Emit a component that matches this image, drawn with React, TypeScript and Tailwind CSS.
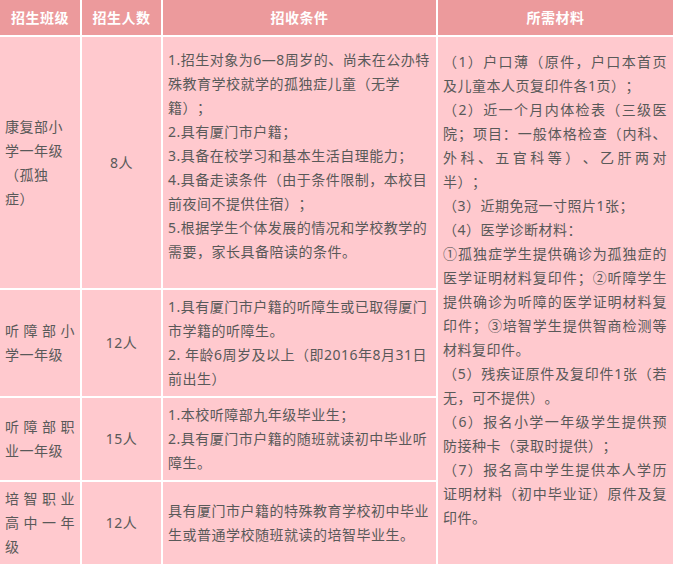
import React from "react";

const cell = "bg-[#ffc9ce] flex items-center";

export default function App() {
  return (
    <div className="w-[673px] h-[564px] overflow-hidden bg-white font-['Noto_Sans','Noto_Sans_CJK_SC',sans-serif] text-[14px] leading-[24px] tracking-[0.5px] text-[#595959] [text-spacing-trim:space-all]">
      <div className="grid grid-cols-[80px_79px_273px_235px] grid-rows-[35px_251px_106px_82px_82px] gap-[2px] bg-white">
        {/* header */}
        <div className="bg-[#ec9a9c] flex items-center justify-center text-white font-bold">招生班级</div>
        <div className="bg-[#ec9a9c] flex items-center justify-center text-white font-bold">招生人数</div>
        <div className="bg-[#ec9a9c] flex items-center justify-center text-white font-bold">招收条件</div>
        <div className="bg-[#ec9a9c] flex items-center justify-center text-white font-bold">所需材料</div>

        {/* row 1 */}
        <div className={`${cell} pl-[5px] pr-[5px]`}>
          <p className="w-full text-left">康复部小学一年级（孤独症）</p>
        </div>
        <div className={`${cell} justify-center`}>8人</div>
        <div className="bg-[#ffc9ce] pl-[5px] pr-[1px] pt-[11px]">
          <p>1.招生对象为6—8周岁的、尚未在公办特殊教育学校就学的孤独症儿童（无学籍）；</p>
          <p>2.具有厦门市户籍；</p>
          <p>3.具备在校学习和基本生活自理能力；</p>
          <p>4.具备走读条件（由于条件限制，本校目前夜间不提供住宿）；</p>
          <p>5.根据学生个体发展的情况和学校教学的需要，家长具备陪读的条件。</p>
        </div>
        <div className="row-span-4 bg-[#ffc9ce] pl-[5px] pr-[6px] pt-[13px] text-justify">
          <p>（1）户口薄（原件，户口本首页及儿童本人页复印件各1页）；</p>
          <p>（2）近一个月内体检表（三级医院；项目：一般体格检查（内科、外科、五官科等）、乙肝两对半）；</p>
          <p>（3）近期免冠一寸照片1张；</p>
          <p>（4）医学诊断材料：</p>
          <p>①孤独症学生提供确诊为孤独症的医学证明材料复印件；②听障学生提供确诊为听障的医学证明材料复印件；③培智学生提供智商检测等材料复印件。</p>
          <p>（5）残疾证原件及复印件1张（若无，可不提供）。</p>
          <p>（6）报名小学一年级学生提供预防接种卡（录取时提供）；</p>
          <p>（7）报名高中学生提供本人学历证明材料（初中毕业证）原件及复印件。</p>
        </div>

        {/* row 2 */}
        <div className={`${cell} pl-[5px] pr-[5px]`}>
          <p className="w-full text-justify">听障部小学一年级</p>
        </div>
        <div className={`${cell} justify-center`}>12人</div>
        <div className={`${cell} pl-[5px] pr-[1px]`}>
          <div>
            <p>1.具有厦门市户籍的听障生或已取得厦门市学籍的听障生。</p>
            <p>2. 年龄6周岁及以上（即2016年8月31日前出生）</p>
          </div>
        </div>

        {/* row 3 */}
        <div className={`${cell} pl-[5px] pr-[5px]`}>
          <p className="w-full text-justify">听障部职业一年级</p>
        </div>
        <div className={`${cell} justify-center`}>15人</div>
        <div className={`${cell} pl-[5px] pr-[1px]`}>
          <div>
            <p>1.本校听障部九年级毕业生；</p>
            <p>2.具有厦门市户籍的随班就读初中毕业听障生。</p>
          </div>
        </div>

        {/* row 4 */}
        <div className={`${cell} pl-[5px] pr-[5px]`}>
          <p className="w-full text-justify">培智职业高中一年级</p>
        </div>
        <div className={`${cell} justify-center`}>12人</div>
        <div className={`${cell} pl-[5px] pr-[1px]`}>
          <p>具有厦门市户籍的特殊教育学校初中毕业生或普通学校随班就读的培智毕业生。</p>
        </div>
      </div>
    </div>
  );
}
